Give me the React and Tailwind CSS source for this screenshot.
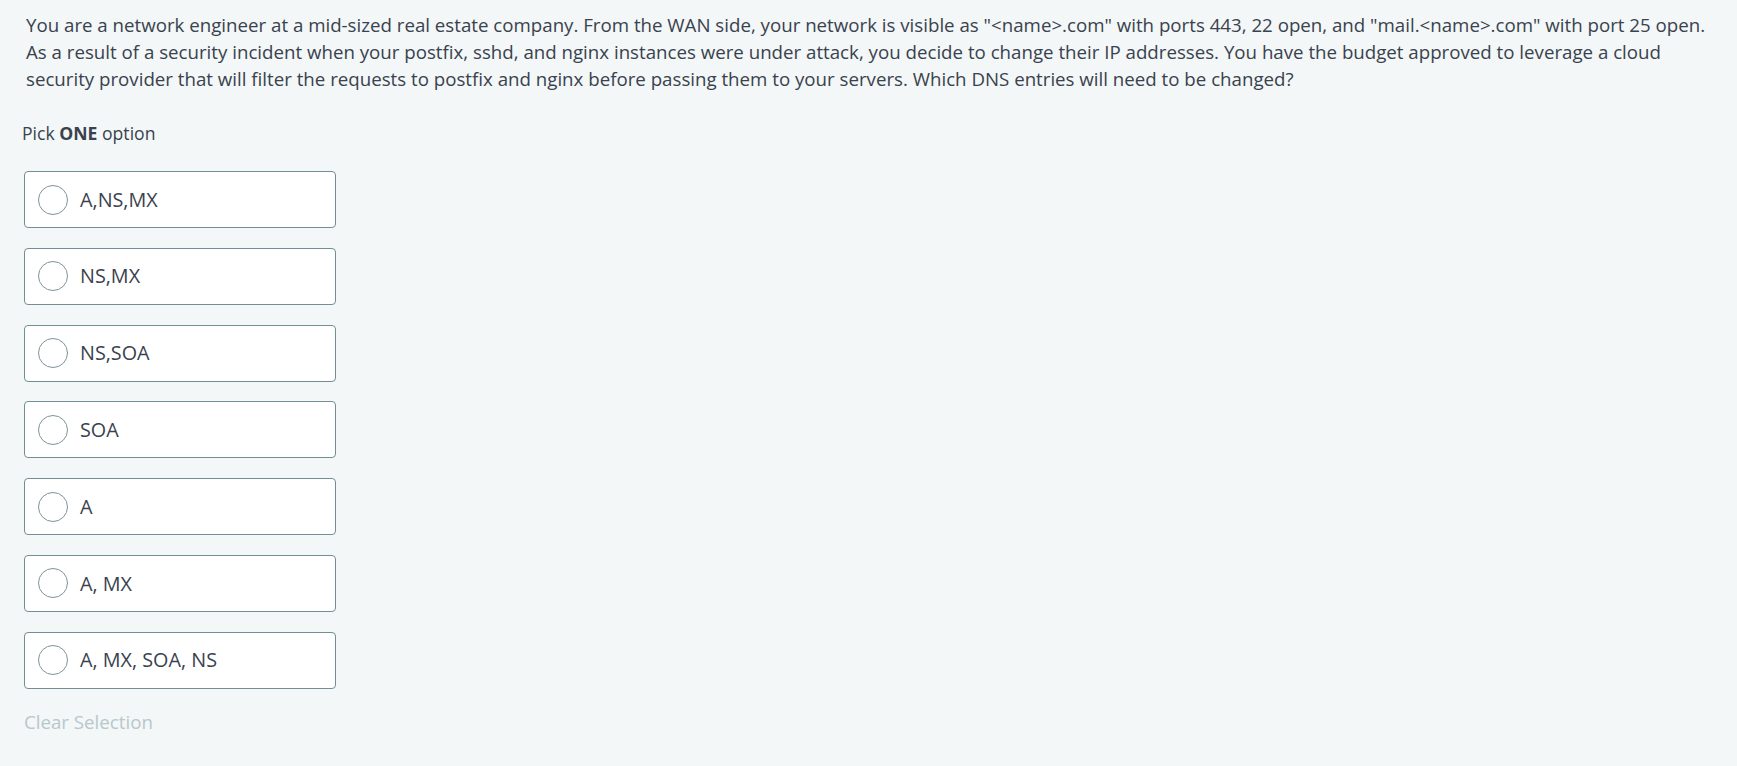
const options = ['A,NS,MX', 'NS,MX', 'NS,SOA', 'SOA', 'A', 'A, MX', 'A, MX, SOA, NS']

export default function App() {
  return (
    <div className="min-h-screen bg-[#f3f7f7] text-[#39424e]" style={{ fontFamily: '"Open Sans", sans-serif' }}>
      <div className="pl-[26px] pr-[30px] pt-[11px]">
        <p className="text-[18.7px] leading-[27px]">
          You are a network engineer at a mid-sized real estate company. From the WAN side, your network is visible as "&lt;name&gt;.com" with ports 443, 22 open, and "mail.&lt;name&gt;.com" with port 25 open. As a result of a security incident when your postfix, sshd, and nginx instances were under attack, you decide to change their IP addresses. You have the budget approved to leverage a cloud security provider that will filter the requests to postfix and nginx before passing them to your servers. Which DNS entries will need to be changed?
        </p>
      </div>
      <div className="pl-[24px]">
        <p className="mt-[29px] -ml-[2px] text-[17.6px] leading-6">
          Pick <span className="font-bold">ONE</span> option
        </p>
        <div className="mt-[26px] flex flex-col gap-[19.8px]">
          {options.map((o) => (
            <label key={o} className="flex h-[57px] w-[312px] cursor-pointer items-center gap-[12px] rounded-[4px] border border-[#738f93] bg-white pl-[13px]">
              <span className="h-[30px] w-[30px] rounded-full border border-[#7d9499] bg-white" />
              <span className="text-[19.8px]">{o}</span>
            </label>
          ))}
        </div>
        <button className="mt-[19px] text-[18.7px] text-[#b7c8cc]">Clear Selection</button>
      </div>
    </div>
  )
}
